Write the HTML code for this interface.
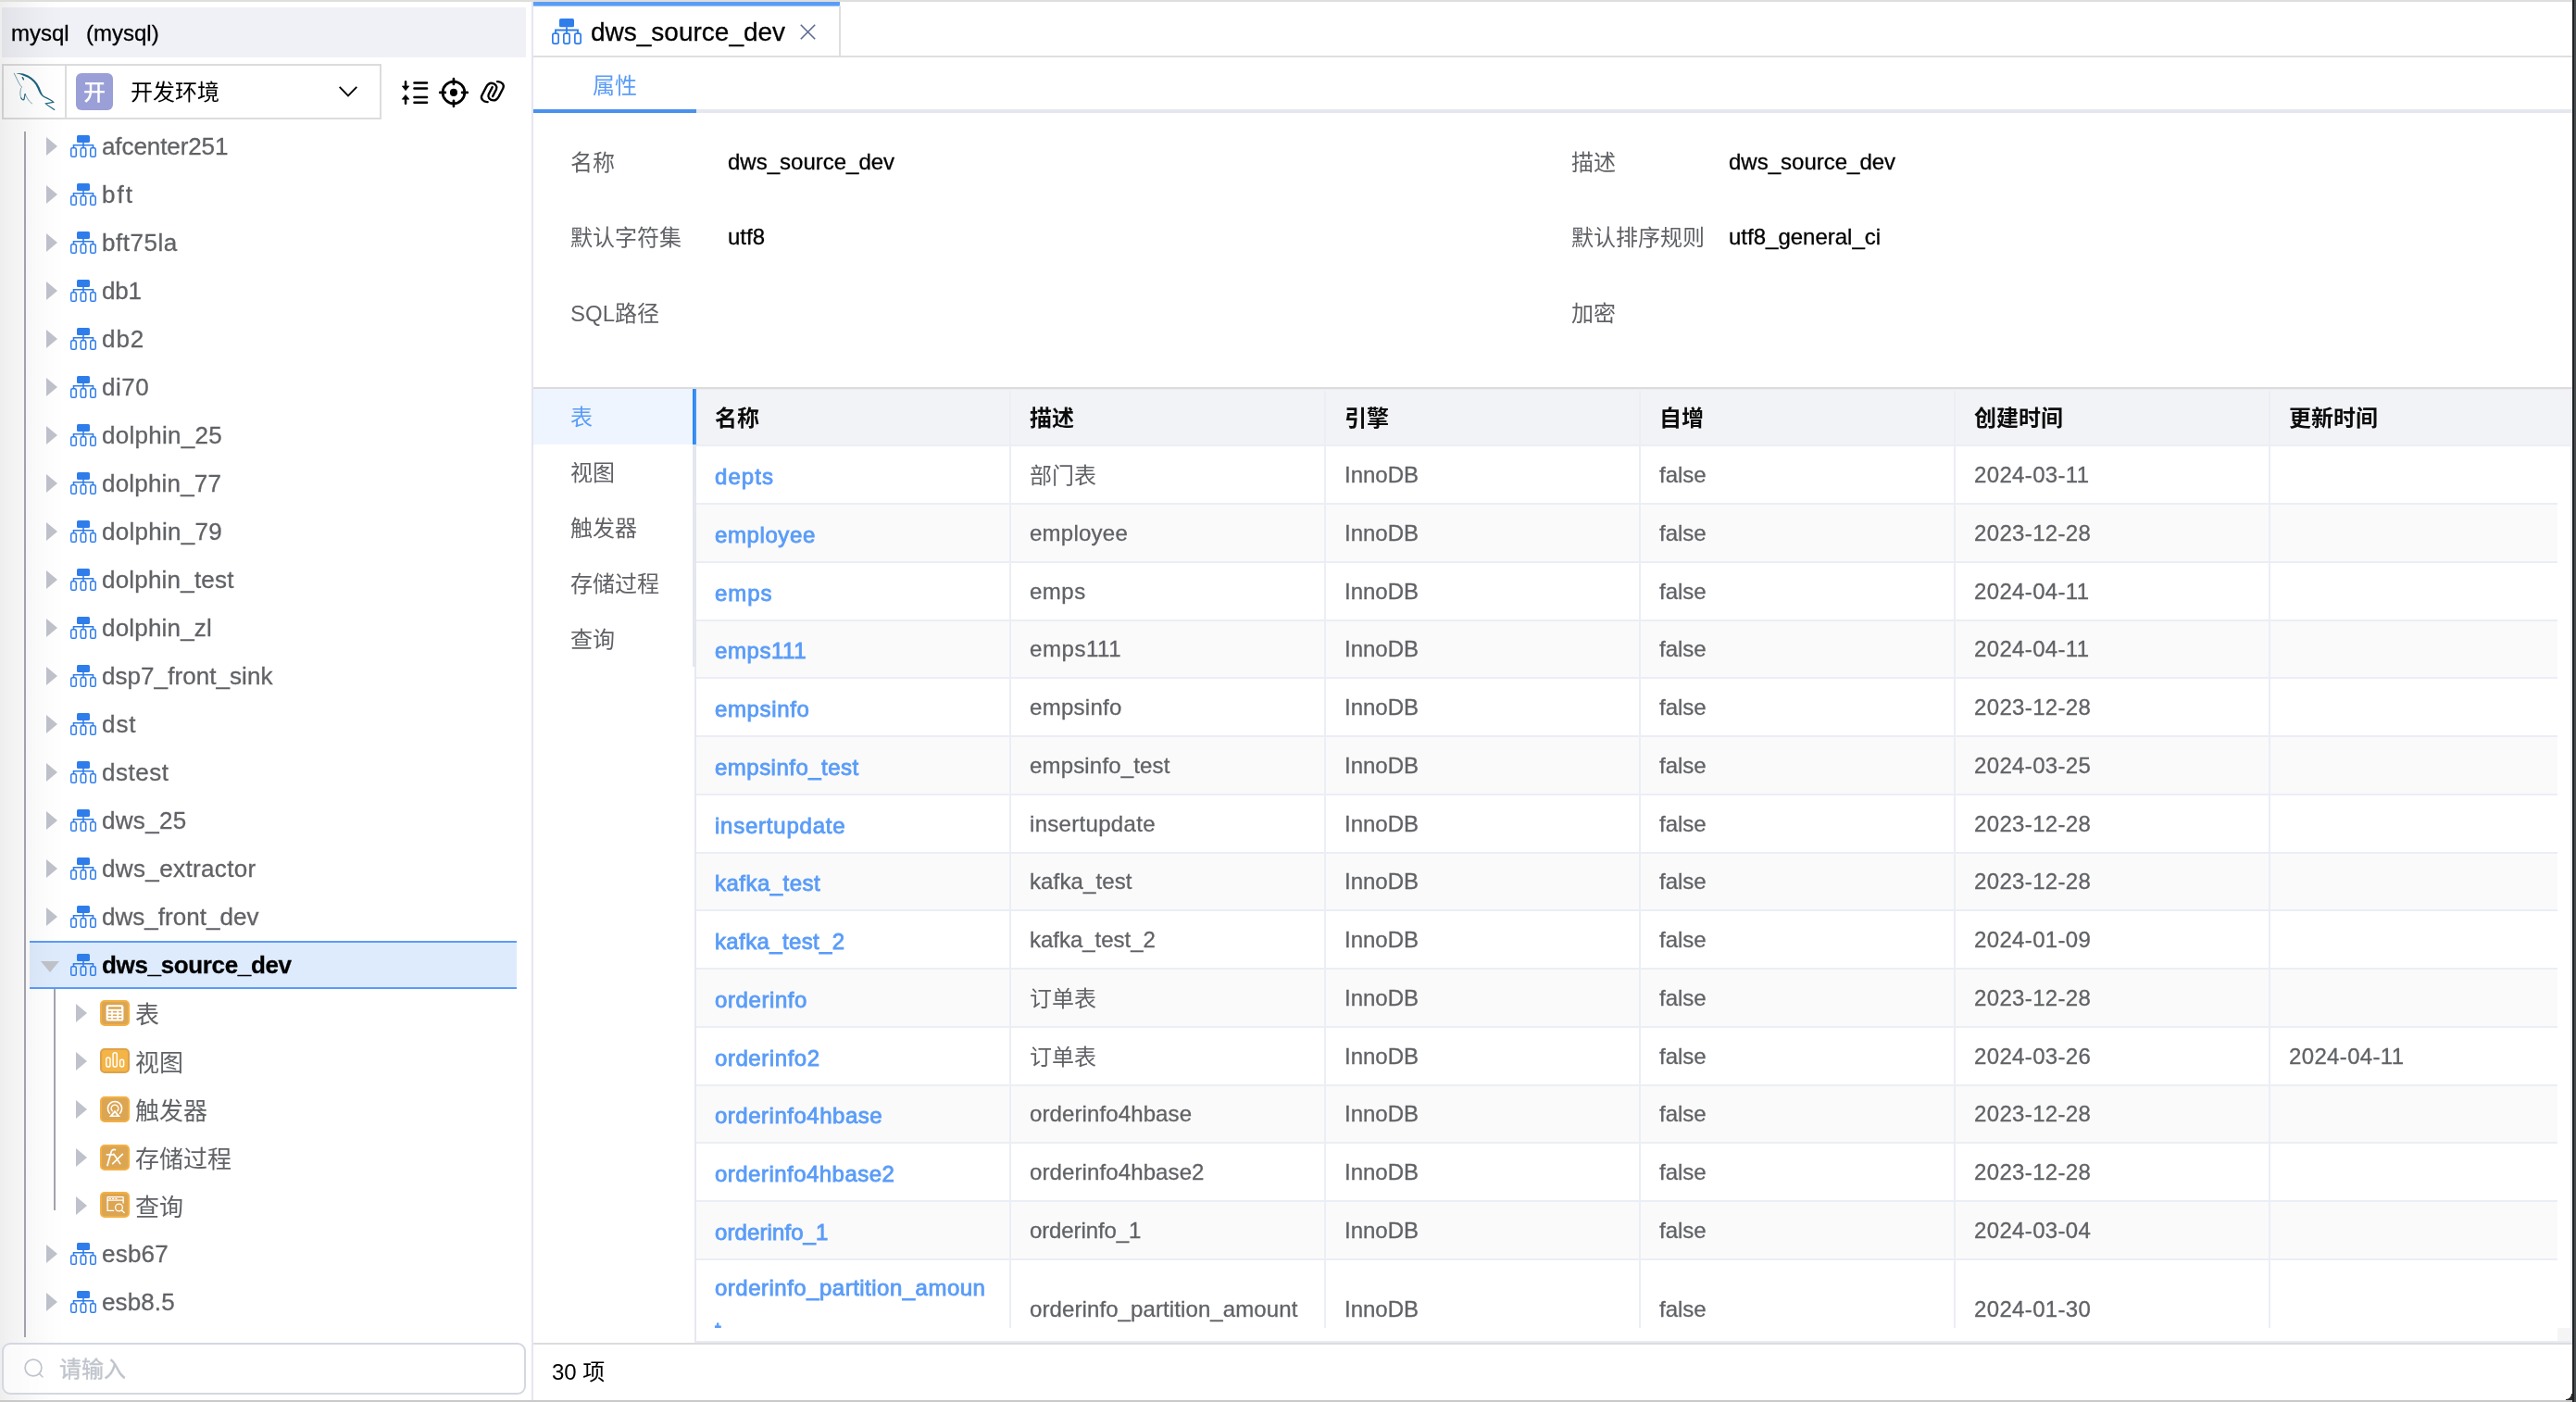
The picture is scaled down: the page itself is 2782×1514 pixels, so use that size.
<!DOCTYPE html>
<html lang="zh-CN"><head><meta charset="utf-8"><title>dws_source_dev</title>
<style>
html,body{margin:0;padding:0;}
body{will-change:transform;-webkit-text-stroke:0.3px;width:2782px;height:1514px;position:relative;overflow:hidden;background:#fff;font-family:"Liberation Sans","Noto Sans CJK SC",sans-serif;}
body div{position:absolute;white-space:nowrap;box-sizing:border-box;}
svg{position:absolute;overflow:visible;}
.ic{fill:none;stroke:#2f7deb;stroke-width:1.5;}
</style></head><body>
<svg width="0" height="0" style="left:0;top:0"><defs>
<symbol id="db" viewBox="0 0 28 24" overflow="visible">
<rect x="7" y="0" width="14" height="8" rx="1.6" fill="#2f7deb"/>
<path d="M14 8V13.5M3.5 13.5V10.75H24.5V13.5" fill="none" stroke="#2f7deb" stroke-width="1.6"/>
<rect x="0.75" y="13.75" width="5.5" height="9.5" rx="1.6" fill="none" stroke="#2f7deb" stroke-width="1.5"/>
<rect x="11.25" y="13.75" width="5.5" height="9.5" rx="1.6" fill="none" stroke="#2f7deb" stroke-width="1.5"/>
<rect x="21.75" y="13.75" width="5.5" height="9.5" rx="1.6" fill="none" stroke="#2f7deb" stroke-width="1.5"/>
</symbol>
</defs></svg>

<div style="left:0px;top:0px;width:2782px;height:2px;background:#dededc;"></div>
<div style="left:2px;top:8px;width:566px;height:54px;background:#f0f1f7;"></div>
<div style="left:12px;top:18px;height:36px;line-height:36px;font-size:24px;color:#000;">mysql</div>
<div style="left:93px;top:18px;height:36px;line-height:36px;font-size:24px;color:#000;">(mysql)</div>
<div style="left:2px;top:69px;width:410px;height:60px;border:2px solid #dcdcdc;background:#fff;"></div>
<div style="left:70px;top:71px;width:2px;height:56px;background:#dcdcdc;"></div>
<svg style="left:0;top:64px" width="140" height="70" viewBox="0 0 2576 1288">
<path d="M322 280 C400 270 480 285 560 322 C660 375 740 460 785 560 C815 640 835 700 880 738 L862 752 C800 715 775 650 742 570 C705 485 640 415 555 365 C485 325 410 300 322 280Z" fill="#1d6480"/>
<path d="M862 740 C930 770 1010 800 1062 852 L908 880 C960 930 1030 965 1088 1008" fill="none" stroke="#1d6480" stroke-width="21" stroke-linejoin="miter" stroke-miterlimit="6"/>
<path d="M280 280 C300 330 330 370 350 420 C370 470 395 510 435 555 C415 570 410 585 412 600 C398 650 398 720 420 770 C440 810 470 815 480 790 C488 750 492 715 500 690 C520 730 540 780 580 830 C600 850 620 870 635 880" fill="none" stroke="#3b7a92" stroke-width="13" stroke-linejoin="round" stroke-linecap="round"/>
<path d="M420 770 C440 810 470 815 480 790 C488 750 492 715 500 690" fill="none" stroke="#2a6f88" stroke-width="22" stroke-linejoin="round" stroke-linecap="round"/>
<path d="M447 362 C457 377 465 390 468 402" fill="none" stroke="#1d6480" stroke-width="26" stroke-linecap="round"/>
</svg>
<div style="left:82px;top:79px;width:40px;height:40px;background:#9b9fd7;border-radius:6px;"></div>
<div style="left:82px;top:81.5px;height:36px;line-height:36px;font-size:24px;color:#fff;font-weight:500;width:40px;text-align:center;-webkit-text-stroke:0;">开</div>
<div style="left:141px;top:81.5px;height:36px;line-height:36px;font-size:24px;color:#000;-webkit-text-stroke:0;">开发环境</div>
<svg style="left:366px;top:93px" width="20" height="12" viewBox="0 0 20 12"><path d="M0.7 0.8L10 10.3L19.3 0.8" fill="none" stroke="#000" stroke-width="1.9"/></svg>
<svg style="left:420px;top:70px" width="140" height="60" viewBox="0 0 2576 1104">
<g fill="none" stroke="#000" stroke-width="46" stroke-linecap="round">
<path d="M505 360H755M505 468H755M505 645H755M505 752H755"/>
<path d="M332 335V440M332 770V670"/>
</g>
<path d="M262 422H402L332 510Z M262 684H402L332 596Z" fill="#000" stroke="#000" stroke-width="12" stroke-linejoin="round"/>
<g fill="none" stroke="#000" stroke-width="50">
<circle cx="1287" cy="550" r="218"/>
<path d="M1287 280V385M1287 715V825M1015 550H1120M1455 550H1560" stroke-linecap="round"/>
</g>
<circle cx="1287" cy="550" r="74" fill="#000"/>
</svg>
<svg style="left:510px;top:80px" width="45" height="38" viewBox="0 0 1660.5 1402.2">
<g fill="none" stroke="#000" stroke-width="86" stroke-linecap="round" stroke-linejoin="round">
<path d="M800 520L655 800C600 920 700 1050 850 1050C960 1050 1010 980 1060 890L1230 560C1290 440 1180 290 1000 300"/>
<path d="M814 890L959 610C1014 490 914 360 764 360C654 360 604 430 554 520L384 850C324 970 434 1120 614 1110"/>
</g></svg>
<div style="left:26px;top:142px;width:2px;height:1302px;background:#a8a8b3;"></div>
<div style="left:58px;top:1068px;width:2px;height:239px;background:#a3a3af;"></div>
<svg style="left:50px;top:148px" width="12" height="20" viewBox="0 0 12 20"><path d="M0 0L12 10L0 20Z" fill="#bfc2cb"/></svg>
<svg style="left:76px;top:146px" width="28" height="24"><use href="#db"/></svg>
<div style="left:110px;top:138px;height:40px;line-height:40px;font-size:26px;color:#606266;letter-spacing:-0.09px;">afcenter251</div>
<svg style="left:50px;top:200px" width="12" height="20" viewBox="0 0 12 20"><path d="M0 0L12 10L0 20Z" fill="#bfc2cb"/></svg>
<svg style="left:76px;top:198px" width="28" height="24"><use href="#db"/></svg>
<div style="left:110px;top:190px;height:40px;line-height:40px;font-size:26px;color:#606266;letter-spacing:2.00px;">bft</div>
<svg style="left:50px;top:252px" width="12" height="20" viewBox="0 0 12 20"><path d="M0 0L12 10L0 20Z" fill="#bfc2cb"/></svg>
<svg style="left:76px;top:250px" width="28" height="24"><use href="#db"/></svg>
<div style="left:110px;top:242px;height:40px;line-height:40px;font-size:26px;color:#606266;letter-spacing:0.52px;">bft75la</div>
<svg style="left:50px;top:304px" width="12" height="20" viewBox="0 0 12 20"><path d="M0 0L12 10L0 20Z" fill="#bfc2cb"/></svg>
<svg style="left:76px;top:302px" width="28" height="24"><use href="#db"/></svg>
<div style="left:110px;top:294px;height:40px;line-height:40px;font-size:26px;color:#606266;letter-spacing:-0.15px;">db1</div>
<svg style="left:50px;top:356px" width="12" height="20" viewBox="0 0 12 20"><path d="M0 0L12 10L0 20Z" fill="#bfc2cb"/></svg>
<svg style="left:76px;top:354px" width="28" height="24"><use href="#db"/></svg>
<div style="left:110px;top:346px;height:40px;line-height:40px;font-size:26px;color:#606266;letter-spacing:0.95px;">db2</div>
<svg style="left:50px;top:408px" width="12" height="20" viewBox="0 0 12 20"><path d="M0 0L12 10L0 20Z" fill="#bfc2cb"/></svg>
<svg style="left:76px;top:406px" width="28" height="24"><use href="#db"/></svg>
<div style="left:110px;top:398px;height:40px;line-height:40px;font-size:26px;color:#606266;letter-spacing:0.55px;">di70</div>
<svg style="left:50px;top:460px" width="12" height="20" viewBox="0 0 12 20"><path d="M0 0L12 10L0 20Z" fill="#bfc2cb"/></svg>
<svg style="left:76px;top:458px" width="28" height="24"><use href="#db"/></svg>
<div style="left:110px;top:450px;height:40px;line-height:40px;font-size:26px;color:#606266;letter-spacing:0.27px;">dolphin_25</div>
<svg style="left:50px;top:512px" width="12" height="20" viewBox="0 0 12 20"><path d="M0 0L12 10L0 20Z" fill="#bfc2cb"/></svg>
<svg style="left:76px;top:510px" width="28" height="24"><use href="#db"/></svg>
<div style="left:110px;top:502px;height:40px;line-height:40px;font-size:26px;color:#606266;letter-spacing:0.19px;">dolphin_77</div>
<svg style="left:50px;top:564px" width="12" height="20" viewBox="0 0 12 20"><path d="M0 0L12 10L0 20Z" fill="#bfc2cb"/></svg>
<svg style="left:76px;top:562px" width="28" height="24"><use href="#db"/></svg>
<div style="left:110px;top:554px;height:40px;line-height:40px;font-size:26px;color:#606266;letter-spacing:0.27px;">dolphin_79</div>
<svg style="left:50px;top:616px" width="12" height="20" viewBox="0 0 12 20"><path d="M0 0L12 10L0 20Z" fill="#bfc2cb"/></svg>
<svg style="left:76px;top:614px" width="28" height="24"><use href="#db"/></svg>
<div style="left:110px;top:606px;height:40px;line-height:40px;font-size:26px;color:#606266;letter-spacing:0.20px;">dolphin_test</div>
<svg style="left:50px;top:668px" width="12" height="20" viewBox="0 0 12 20"><path d="M0 0L12 10L0 20Z" fill="#bfc2cb"/></svg>
<svg style="left:76px;top:666px" width="28" height="24"><use href="#db"/></svg>
<div style="left:110px;top:658px;height:40px;line-height:40px;font-size:26px;color:#606266;letter-spacing:0.19px;">dolphin_zl</div>
<svg style="left:50px;top:720px" width="12" height="20" viewBox="0 0 12 20"><path d="M0 0L12 10L0 20Z" fill="#bfc2cb"/></svg>
<svg style="left:76px;top:718px" width="28" height="24"><use href="#db"/></svg>
<div style="left:110px;top:710px;height:40px;line-height:40px;font-size:26px;color:#606266;letter-spacing:0.06px;">dsp7_front_sink</div>
<svg style="left:50px;top:772px" width="12" height="20" viewBox="0 0 12 20"><path d="M0 0L12 10L0 20Z" fill="#bfc2cb"/></svg>
<svg style="left:76px;top:770px" width="28" height="24"><use href="#db"/></svg>
<div style="left:110px;top:762px;height:40px;line-height:40px;font-size:26px;color:#606266;letter-spacing:0.95px;">dst</div>
<svg style="left:50px;top:824px" width="12" height="20" viewBox="0 0 12 20"><path d="M0 0L12 10L0 20Z" fill="#bfc2cb"/></svg>
<svg style="left:76px;top:822px" width="28" height="24"><use href="#db"/></svg>
<div style="left:110px;top:814px;height:40px;line-height:40px;font-size:26px;color:#606266;letter-spacing:0.51px;">dstest</div>
<svg style="left:50px;top:876px" width="12" height="20" viewBox="0 0 12 20"><path d="M0 0L12 10L0 20Z" fill="#bfc2cb"/></svg>
<svg style="left:76px;top:874px" width="28" height="24"><use href="#db"/></svg>
<div style="left:110px;top:866px;height:40px;line-height:40px;font-size:26px;color:#606266;letter-spacing:0.31px;">dws_25</div>
<svg style="left:50px;top:928px" width="12" height="20" viewBox="0 0 12 20"><path d="M0 0L12 10L0 20Z" fill="#bfc2cb"/></svg>
<svg style="left:76px;top:926px" width="28" height="24"><use href="#db"/></svg>
<div style="left:110px;top:918px;height:40px;line-height:40px;font-size:26px;color:#606266;letter-spacing:0.37px;">dws_extractor</div>
<svg style="left:50px;top:980px" width="12" height="20" viewBox="0 0 12 20"><path d="M0 0L12 10L0 20Z" fill="#bfc2cb"/></svg>
<svg style="left:76px;top:978px" width="28" height="24"><use href="#db"/></svg>
<div style="left:110px;top:970px;height:40px;line-height:40px;font-size:26px;color:#606266;letter-spacing:0.04px;">dws_front_dev</div>
<div style="left:32px;top:1016px;width:526px;height:52px;background:#ddebfd;border-top:2px solid #5a9cf8;border-bottom:2px solid #5a9cf8;"></div>
<svg style="left:44px;top:1038px" width="20" height="12" viewBox="0 0 20 12"><path d="M0 0H20L10 12Z" fill="#c0c2c8"/></svg>
<svg style="left:76px;top:1030px" width="28" height="24"><use href="#db"/></svg>
<div style="left:110px;top:1022px;height:40px;line-height:40px;font-size:26px;color:#000;font-weight:700;letter-spacing:-0.35px;">dws_source_dev</div>
<svg style="left:82px;top:1084px" width="12" height="20" viewBox="0 0 12 20"><path d="M0 0L12 10L0 20Z" fill="#bfc2cb"/></svg>
<svg style="left:108px;top:1080px" width="32" height="28" viewBox="0 0 32 28">
<rect x="1" y="1" width="30" height="26" rx="4" fill="#dca552" stroke="#f3b044" stroke-width="2"/>
<rect x="6.6" y="5.2" width="18.8" height="17.4" rx="2.2" fill="#fff"/>
<rect x="9" y="7.2" width="14" height="2.6" rx="0.5" fill="#dca552"/>
<path d="M9.3 12.8H11.6M14.4 12.8H17.8M20.6 12.8H22.8" stroke="#dca552" stroke-width="1.4" stroke-linecap="round"/>
<path d="M9.3 16.25H11.6M14.4 16.25H17.8M20.6 16.25H22.8" stroke="#dca552" stroke-width="1.4" stroke-linecap="round"/>
<path d="M9.3 19.700000000000003H11.6M14.4 19.700000000000003H17.8M20.6 19.700000000000003H22.8" stroke="#dca552" stroke-width="1.4" stroke-linecap="round"/>
</svg>
<div style="left:146px;top:1076px;height:40px;line-height:40px;font-size:26px;color:#606266;-webkit-text-stroke:0;">表</div>
<svg style="left:82px;top:1136px" width="12" height="20" viewBox="0 0 12 20"><path d="M0 0L12 10L0 20Z" fill="#bfc2cb"/></svg>
<svg style="left:108px;top:1132px" width="32" height="28" viewBox="0 0 32 28">
<rect x="1" y="1" width="30" height="25" rx="4" fill="#f4b446" stroke="#dda24c" stroke-width="2"/>
<g fill="none" stroke="#fff" stroke-width="1.5">
<rect x="6.8" y="9.9" width="4.2" height="10.2" rx="2.1"/>
<rect x="14.1" y="4.8" width="4.2" height="15.3" rx="2.1"/>
<rect x="21.6" y="12.3" width="4.0" height="7.8" rx="2"/>
</g>
</svg>
<div style="left:146px;top:1128px;height:40px;line-height:40px;font-size:26px;color:#606266;-webkit-text-stroke:0;">视图</div>
<svg style="left:82px;top:1188px" width="12" height="20" viewBox="0 0 12 20"><path d="M0 0L12 10L0 20Z" fill="#bfc2cb"/></svg>
<svg style="left:108px;top:1184px" width="32" height="28" viewBox="0 0 32 28">
<rect x="1" y="1" width="30" height="26" rx="4" fill="#dca552" stroke="#f3b044" stroke-width="2"/>
<g fill="none" stroke="#fff" stroke-width="1.5" stroke-linecap="round">
<path d="M10.4 18.2A7.6 7.6 0 1 1 21.6 18.2"/>
<path d="M13.2 15.6A3.8 3.8 0 1 1 18.8 15.6"/>
</g>
<path d="M16 14.8L22.2 22H9.8Z" fill="#fff"/><path d="M16 17.6L18.2 20.4H13.8Z" fill="#dca552"/>
</svg>
<div style="left:146px;top:1180px;height:40px;line-height:40px;font-size:26px;color:#606266;-webkit-text-stroke:0;">触发器</div>
<svg style="left:82px;top:1240px" width="12" height="20" viewBox="0 0 12 20"><path d="M0 0L12 10L0 20Z" fill="#bfc2cb"/></svg>
<svg style="left:108px;top:1236px" width="32" height="28" viewBox="0 0 32 28">
<rect x="1" y="1" width="30" height="26" rx="4" fill="#dca552" stroke="#f3b044" stroke-width="2"/>
<g fill="none" stroke="#fff" stroke-width="1.7" stroke-linecap="round">
<path d="M16.4 5.6C13.6 4.9 12.2 6.6 11.7 9.3L8 22.6"/>
<path d="M7.4 10.8H14.6"/>
<path d="M14.9 10.3L21.7 20.6M24.4 10.3L13.7 20.6"/>
</g>
</svg>
<div style="left:146px;top:1232px;height:40px;line-height:40px;font-size:26px;color:#606266;-webkit-text-stroke:0;">存储过程</div>
<svg style="left:82px;top:1292px" width="12" height="20" viewBox="0 0 12 20"><path d="M0 0L12 10L0 20Z" fill="#bfc2cb"/></svg>
<svg style="left:108px;top:1287px" width="32" height="28" viewBox="0 0 32 28">
<rect x="1" y="1" width="30" height="26" rx="4" fill="#dca552" stroke="#f3b044" stroke-width="2"/>
<g fill="none" stroke="#fff" stroke-width="1.3" stroke-linecap="round" stroke-linejoin="round">
<path d="M25.1 12V5.6H8.1V20.4H14.6"/>
<path d="M8.1 9.2H25.1"/>
<circle cx="20.5" cy="17" r="3.9"/>
<path d="M23.4 20L26.2 22.6"/>
</g>
<path d="M10.3 7.4H11.4M13.6 7.4H14.7M16.9 7.4H18" stroke="#fff" stroke-width="1.2" stroke-linecap="round"/>
</svg>
<div style="left:146px;top:1284px;height:40px;line-height:40px;font-size:26px;color:#606266;-webkit-text-stroke:0;">查询</div>
<svg style="left:50px;top:1344px" width="12" height="20" viewBox="0 0 12 20"><path d="M0 0L12 10L0 20Z" fill="#bfc2cb"/></svg>
<svg style="left:76px;top:1342px" width="28" height="24"><use href="#db"/></svg>
<div style="left:110px;top:1334px;height:40px;line-height:40px;font-size:26px;color:#606266;letter-spacing:0.22px;">esb67</div>
<svg style="left:50px;top:1396px" width="12" height="20" viewBox="0 0 12 20"><path d="M0 0L12 10L0 20Z" fill="#bfc2cb"/></svg>
<svg style="left:76px;top:1394px" width="28" height="24"><use href="#db"/></svg>
<div style="left:110px;top:1386px;height:40px;line-height:40px;font-size:26px;color:#606266;letter-spacing:0.11px;">esb8.5</div>
<div style="left:0px;top:2px;width:70px;height:1510px;background:linear-gradient(to right,rgba(0,0,0,0.067) 0,rgba(0,0,0,0.047) 18.5%,rgba(0,0,0,0.035) 37%,rgba(0,0,0,0.02) 57%,rgba(0,0,0,0.008) 78%,rgba(0,0,0,0) 100%);"></div>
<div style="left:2px;top:1450px;width:566px;height:56px;border:2px solid #d4d7e1;border-radius:9px;background:rgba(255,255,255,0.6);"></div>
<svg style="left:25px;top:1466px" width="24" height="24" viewBox="0 0 24 24"><circle cx="11" cy="11" r="8.9" fill="none" stroke="#c0c4cc" stroke-width="1.7"/><path d="M17.4 17.4L21 21" stroke="#c0c4cc" stroke-width="1.5" stroke-linecap="round"/></svg>
<div style="left:64px;top:1460.5px;height:36px;line-height:36px;font-size:24px;color:#c0c4cc;-webkit-text-stroke:0.4px #c0c4cc;">请输入</div>
<div style="left:574px;top:2px;width:2px;height:1510px;background:#e4e6ef;"></div>
<div style="left:576px;top:60px;width:2202px;height:2px;background:#dfdfdf;"></div>
<div style="left:576px;top:2px;width:331px;height:5px;background:linear-gradient(#5a9df7 0,#5a9df7 80%,#9cc4fa 80%,#9cc4fa 100%);"></div>
<div style="left:906px;top:6px;width:2px;height:54px;background:#dfdfdf;"></div>
<svg style="left:596px;top:20px" width="32" height="28" viewBox="0 0 28 24" preserveAspectRatio="none"><use href="#db"/></svg>
<div style="left:638px;top:13.7px;height:42px;line-height:42px;font-size:28px;color:#000;">dws_source_dev</div>
<svg style="left:864px;top:26px" width="17" height="17" viewBox="0 0 17 17"><path d="M0.8 0.8L16.2 16.2M16.2 0.8L0.8 16.2" stroke="#5a6b8c" stroke-width="1.6" fill="none"/></svg>
<div style="left:576px;top:118px;width:2202px;height:4px;background:#e4e7ed;"></div>
<div style="left:576px;top:118px;width:176px;height:4px;background:#4a90ef;"></div>
<div style="left:640px;top:74.5px;height:36px;line-height:36px;font-size:24px;color:#5a9cf8;-webkit-text-stroke:0;">属性</div>
<div style="left:616px;top:158.3px;height:36px;line-height:36px;font-size:24px;color:#606266;-webkit-text-stroke:0;">名称</div>
<div style="left:786px;top:157px;height:36px;line-height:36px;font-size:24px;color:#000;">dws_source_dev</div>
<div style="left:616px;top:239.3px;height:36px;line-height:36px;font-size:24px;color:#606266;-webkit-text-stroke:0;">默认字符集</div>
<div style="left:786px;top:238px;height:36px;line-height:36px;font-size:24px;color:#000;">utf8</div>
<div style="left:616px;top:320.6px;height:36px;line-height:36px;font-size:24px;color:#606266;-webkit-text-stroke:0;">SQL路径</div>
<div style="left:1697px;top:158.3px;height:36px;line-height:36px;font-size:24px;color:#606266;-webkit-text-stroke:0;">描述</div>
<div style="left:1867px;top:157px;height:36px;line-height:36px;font-size:24px;color:#000;">dws_source_dev</div>
<div style="left:1697px;top:239.3px;height:36px;line-height:36px;font-size:24px;color:#606266;-webkit-text-stroke:0;">默认排序规则</div>
<div style="left:1867px;top:238px;height:36px;line-height:36px;font-size:24px;color:#000;">utf8_general_ci</div>
<div style="left:1697px;top:320.6px;height:36px;line-height:36px;font-size:24px;color:#606266;-webkit-text-stroke:0;">加密</div>
<div style="left:576px;top:418px;width:2202px;height:2px;background:#dcdcdb;"></div>
<div style="left:576px;top:420px;width:172px;height:60px;background:#eef5fe;"></div>
<div style="left:748px;top:420px;width:4px;height:300px;background:#e4e7ed;"></div>
<div style="left:748px;top:420px;width:4px;height:60px;background:linear-gradient(to right,#2d86f6 50%,#4395f6 50%);"></div>
<div style="left:616px;top:433px;height:36px;line-height:36px;font-size:24px;color:#5a9cf8;-webkit-text-stroke:0;">表</div>
<div style="left:616px;top:493px;height:36px;line-height:36px;font-size:24px;color:#606266;-webkit-text-stroke:0;">视图</div>
<div style="left:616px;top:553px;height:36px;line-height:36px;font-size:24px;color:#606266;-webkit-text-stroke:0;">触发器</div>
<div style="left:616px;top:613px;height:36px;line-height:36px;font-size:24px;color:#606266;-webkit-text-stroke:0;">存储过程</div>
<div style="left:616px;top:673px;height:36px;line-height:36px;font-size:24px;color:#606266;-webkit-text-stroke:0;">查询</div>
<div style="left:750px;top:720px;width:2px;height:728px;background:#e6e9f2;"></div>
<div style="left:752px;top:420px;width:2025px;height:60px;background:#f2f3f6;"></div>
<div style="left:752px;top:480px;width:2025px;height:2px;background:#ebeef5;"></div>
<div style="left:752px;top:420px;width:2025px;height:1px;background:#eaedf5;"></div>
<div style="left:772px;top:433.8px;height:36px;line-height:36px;font-size:24px;color:#0b0b0b;font-weight:700;-webkit-text-stroke:0;">名称</div>
<div style="left:1112px;top:433.8px;height:36px;line-height:36px;font-size:24px;color:#0b0b0b;font-weight:700;-webkit-text-stroke:0;">描述</div>
<div style="left:1452px;top:433.8px;height:36px;line-height:36px;font-size:24px;color:#0b0b0b;font-weight:700;-webkit-text-stroke:0;">引擎</div>
<div style="left:1792px;top:433.8px;height:36px;line-height:36px;font-size:24px;color:#0b0b0b;font-weight:700;-webkit-text-stroke:0;">自增</div>
<div style="left:2132px;top:433.8px;height:36px;line-height:36px;font-size:24px;color:#0b0b0b;font-weight:700;-webkit-text-stroke:0;">创建时间</div>
<div style="left:2472px;top:433.8px;height:36px;line-height:36px;font-size:24px;color:#0b0b0b;font-weight:700;-webkit-text-stroke:0;">更新时间</div>
<div style="left:752px;top:482px;width:2010px;height:952px;overflow:hidden;">
<div style="left:0;top:0px;width:2010px;height:63px;background:#fff;border-bottom:2px solid #ebeef5;"></div>
<div style="left:20px;top:9.5px;height:46px;line-height:46px;font-size:24px;color:#5a9cf8;letter-spacing:1.05px;-webkit-text-stroke:0.85px #5a9cf8;">depts</div>
<div style="left:360px;top:8.5px;height:46px;line-height:46px;font-size:24px;color:#606266;-webkit-text-stroke:0;">部门表</div>
<div style="left:700px;top:7.5px;height:46px;line-height:46px;font-size:24px;color:#606266;">InnoDB</div>
<div style="left:1040px;top:7.5px;height:46px;line-height:46px;font-size:24px;color:#606266;">false</div>
<div style="left:1380px;top:7.5px;height:46px;line-height:46px;font-size:24px;color:#606266;letter-spacing:0.35px;">2024-03-11</div>
<div style="left:0;top:63px;width:2010px;height:63px;background:#fafafa;border-bottom:2px solid #ebeef5;"></div>
<div style="left:20px;top:72.5px;height:46px;line-height:46px;font-size:24px;color:#5a9cf8;letter-spacing:0.60px;-webkit-text-stroke:0.85px #5a9cf8;">employee</div>
<div style="left:360px;top:70.5px;height:46px;line-height:46px;font-size:24px;color:#606266;letter-spacing:0.24px;">employee</div>
<div style="left:700px;top:70.5px;height:46px;line-height:46px;font-size:24px;color:#606266;">InnoDB</div>
<div style="left:1040px;top:70.5px;height:46px;line-height:46px;font-size:24px;color:#606266;">false</div>
<div style="left:1380px;top:70.5px;height:46px;line-height:46px;font-size:24px;color:#606266;letter-spacing:0.35px;">2023-12-28</div>
<div style="left:0;top:126px;width:2010px;height:63px;background:#fff;border-bottom:2px solid #ebeef5;"></div>
<div style="left:20px;top:135.5px;height:46px;line-height:46px;font-size:24px;color:#5a9cf8;letter-spacing:0.97px;-webkit-text-stroke:0.85px #5a9cf8;">emps</div>
<div style="left:360px;top:133.5px;height:46px;line-height:46px;font-size:24px;color:#606266;letter-spacing:0.5px;">emps</div>
<div style="left:700px;top:133.5px;height:46px;line-height:46px;font-size:24px;color:#606266;">InnoDB</div>
<div style="left:1040px;top:133.5px;height:46px;line-height:46px;font-size:24px;color:#606266;">false</div>
<div style="left:1380px;top:133.5px;height:46px;line-height:46px;font-size:24px;color:#606266;letter-spacing:0.35px;">2024-04-11</div>
<div style="left:0;top:189px;width:2010px;height:62px;background:#fafafa;border-bottom:2px solid #ebeef5;"></div>
<div style="left:20px;top:198px;height:46px;line-height:46px;font-size:24px;color:#5a9cf8;letter-spacing:0.57px;-webkit-text-stroke:0.85px #5a9cf8;">emps111</div>
<div style="left:360px;top:196px;height:46px;line-height:46px;font-size:24px;color:#606266;letter-spacing:0.57px;">emps111</div>
<div style="left:700px;top:196px;height:46px;line-height:46px;font-size:24px;color:#606266;">InnoDB</div>
<div style="left:1040px;top:196px;height:46px;line-height:46px;font-size:24px;color:#606266;">false</div>
<div style="left:1380px;top:196px;height:46px;line-height:46px;font-size:24px;color:#606266;letter-spacing:0.35px;">2024-04-11</div>
<div style="left:0;top:251px;width:2010px;height:63px;background:#fff;border-bottom:2px solid #ebeef5;"></div>
<div style="left:20px;top:260.5px;height:46px;line-height:46px;font-size:24px;color:#5a9cf8;letter-spacing:0.64px;-webkit-text-stroke:0.85px #5a9cf8;">empsinfo</div>
<div style="left:360px;top:258.5px;height:46px;line-height:46px;font-size:24px;color:#606266;letter-spacing:0.29px;">empsinfo</div>
<div style="left:700px;top:258.5px;height:46px;line-height:46px;font-size:24px;color:#606266;">InnoDB</div>
<div style="left:1040px;top:258.5px;height:46px;line-height:46px;font-size:24px;color:#606266;">false</div>
<div style="left:1380px;top:258.5px;height:46px;line-height:46px;font-size:24px;color:#606266;letter-spacing:0.35px;">2023-12-28</div>
<div style="left:0;top:314px;width:2010px;height:63px;background:#fafafa;border-bottom:2px solid #ebeef5;"></div>
<div style="left:20px;top:323.5px;height:46px;line-height:46px;font-size:24px;color:#5a9cf8;letter-spacing:0.48px;-webkit-text-stroke:0.85px #5a9cf8;">empsinfo_test</div>
<div style="left:360px;top:321.5px;height:46px;line-height:46px;font-size:24px;color:#606266;letter-spacing:0.17px;">empsinfo_test</div>
<div style="left:700px;top:321.5px;height:46px;line-height:46px;font-size:24px;color:#606266;">InnoDB</div>
<div style="left:1040px;top:321.5px;height:46px;line-height:46px;font-size:24px;color:#606266;">false</div>
<div style="left:1380px;top:321.5px;height:46px;line-height:46px;font-size:24px;color:#606266;letter-spacing:0.35px;">2024-03-25</div>
<div style="left:0;top:377px;width:2010px;height:63px;background:#fff;border-bottom:2px solid #ebeef5;"></div>
<div style="left:20px;top:386.5px;height:46px;line-height:46px;font-size:24px;color:#5a9cf8;letter-spacing:0.77px;-webkit-text-stroke:0.85px #5a9cf8;">insertupdate</div>
<div style="left:360px;top:384.5px;height:46px;line-height:46px;font-size:24px;color:#606266;letter-spacing:0.31px;">insertupdate</div>
<div style="left:700px;top:384.5px;height:46px;line-height:46px;font-size:24px;color:#606266;">InnoDB</div>
<div style="left:1040px;top:384.5px;height:46px;line-height:46px;font-size:24px;color:#606266;">false</div>
<div style="left:1380px;top:384.5px;height:46px;line-height:46px;font-size:24px;color:#606266;letter-spacing:0.35px;">2023-12-28</div>
<div style="left:0;top:440px;width:2010px;height:62px;background:#fafafa;border-bottom:2px solid #ebeef5;"></div>
<div style="left:20px;top:449px;height:46px;line-height:46px;font-size:24px;color:#5a9cf8;letter-spacing:0.48px;-webkit-text-stroke:0.85px #5a9cf8;">kafka_test</div>
<div style="left:360px;top:447px;height:46px;line-height:46px;font-size:24px;color:#606266;letter-spacing:0.12px;">kafka_test</div>
<div style="left:700px;top:447px;height:46px;line-height:46px;font-size:24px;color:#606266;">InnoDB</div>
<div style="left:1040px;top:447px;height:46px;line-height:46px;font-size:24px;color:#606266;">false</div>
<div style="left:1380px;top:447px;height:46px;line-height:46px;font-size:24px;color:#606266;letter-spacing:0.35px;">2023-12-28</div>
<div style="left:0;top:502px;width:2010px;height:63px;background:#fff;border-bottom:2px solid #ebeef5;"></div>
<div style="left:20px;top:511.5px;height:46px;line-height:46px;font-size:24px;color:#5a9cf8;letter-spacing:0.37px;-webkit-text-stroke:0.85px #5a9cf8;">kafka_test_2</div>
<div style="left:360px;top:509.5px;height:46px;line-height:46px;font-size:24px;color:#606266;letter-spacing:-0.02px;">kafka_test_2</div>
<div style="left:700px;top:509.5px;height:46px;line-height:46px;font-size:24px;color:#606266;">InnoDB</div>
<div style="left:1040px;top:509.5px;height:46px;line-height:46px;font-size:24px;color:#606266;">false</div>
<div style="left:1380px;top:509.5px;height:46px;line-height:46px;font-size:24px;color:#606266;letter-spacing:0.35px;">2024-01-09</div>
<div style="left:0;top:565px;width:2010px;height:63px;background:#fafafa;border-bottom:2px solid #ebeef5;"></div>
<div style="left:20px;top:574.5px;height:46px;line-height:46px;font-size:24px;color:#5a9cf8;letter-spacing:0.59px;-webkit-text-stroke:0.85px #5a9cf8;">orderinfo</div>
<div style="left:360px;top:573.5px;height:46px;line-height:46px;font-size:24px;color:#606266;-webkit-text-stroke:0;">订单表</div>
<div style="left:700px;top:572.5px;height:46px;line-height:46px;font-size:24px;color:#606266;">InnoDB</div>
<div style="left:1040px;top:572.5px;height:46px;line-height:46px;font-size:24px;color:#606266;">false</div>
<div style="left:1380px;top:572.5px;height:46px;line-height:46px;font-size:24px;color:#606266;letter-spacing:0.35px;">2023-12-28</div>
<div style="left:0;top:628px;width:2010px;height:63px;background:#fff;border-bottom:2px solid #ebeef5;"></div>
<div style="left:20px;top:637.5px;height:46px;line-height:46px;font-size:24px;color:#5a9cf8;letter-spacing:0.56px;-webkit-text-stroke:0.85px #5a9cf8;">orderinfo2</div>
<div style="left:360px;top:636.5px;height:46px;line-height:46px;font-size:24px;color:#606266;-webkit-text-stroke:0;">订单表</div>
<div style="left:700px;top:635.5px;height:46px;line-height:46px;font-size:24px;color:#606266;">InnoDB</div>
<div style="left:1040px;top:635.5px;height:46px;line-height:46px;font-size:24px;color:#606266;">false</div>
<div style="left:1380px;top:635.5px;height:46px;line-height:46px;font-size:24px;color:#606266;letter-spacing:0.35px;">2024-03-26</div>
<div style="left:1720px;top:635.5px;height:46px;line-height:46px;font-size:24px;color:#606266;letter-spacing:0.35px;">2024-04-11</div>
<div style="left:0;top:691px;width:2010px;height:62px;background:#fafafa;border-bottom:2px solid #ebeef5;"></div>
<div style="left:20px;top:700px;height:46px;line-height:46px;font-size:24px;color:#5a9cf8;letter-spacing:0.51px;-webkit-text-stroke:0.85px #5a9cf8;">orderinfo4hbase</div>
<div style="left:360px;top:698px;height:46px;line-height:46px;font-size:24px;color:#606266;letter-spacing:0.11px;">orderinfo4hbase</div>
<div style="left:700px;top:698px;height:46px;line-height:46px;font-size:24px;color:#606266;">InnoDB</div>
<div style="left:1040px;top:698px;height:46px;line-height:46px;font-size:24px;color:#606266;">false</div>
<div style="left:1380px;top:698px;height:46px;line-height:46px;font-size:24px;color:#606266;letter-spacing:0.35px;">2023-12-28</div>
<div style="left:0;top:753px;width:2010px;height:63px;background:#fff;border-bottom:2px solid #ebeef5;"></div>
<div style="left:20px;top:762.5px;height:46px;line-height:46px;font-size:24px;color:#5a9cf8;letter-spacing:0.47px;-webkit-text-stroke:0.85px #5a9cf8;">orderinfo4hbase2</div>
<div style="left:360px;top:760.5px;height:46px;line-height:46px;font-size:24px;color:#606266;letter-spacing:0.11px;">orderinfo4hbase2</div>
<div style="left:700px;top:760.5px;height:46px;line-height:46px;font-size:24px;color:#606266;">InnoDB</div>
<div style="left:1040px;top:760.5px;height:46px;line-height:46px;font-size:24px;color:#606266;">false</div>
<div style="left:1380px;top:760.5px;height:46px;line-height:46px;font-size:24px;color:#606266;letter-spacing:0.35px;">2023-12-28</div>
<div style="left:0;top:816px;width:2010px;height:63px;background:#fafafa;border-bottom:2px solid #ebeef5;"></div>
<div style="left:20px;top:825.5px;height:46px;line-height:46px;font-size:24px;color:#5a9cf8;letter-spacing:0.10px;-webkit-text-stroke:0.85px #5a9cf8;">orderinfo_1</div>
<div style="left:360px;top:823.5px;height:46px;line-height:46px;font-size:24px;color:#606266;letter-spacing:-0.11px;">orderinfo_1</div>
<div style="left:700px;top:823.5px;height:46px;line-height:46px;font-size:24px;color:#606266;">InnoDB</div>
<div style="left:1040px;top:823.5px;height:46px;line-height:46px;font-size:24px;color:#606266;">false</div>
<div style="left:1380px;top:823.5px;height:46px;line-height:46px;font-size:24px;color:#606266;letter-spacing:0.35px;">2024-03-04</div>
<div style="left:0;top:879px;width:2010px;height:108px;background:#fff;border-bottom:2px solid #ebeef5;"></div>
<div style="left:20px;top:885.5px;width:296px;line-height:46px;font-size:24px;color:#5a9cf8;white-space:normal;word-break:break-all;letter-spacing:0.49px;-webkit-text-stroke:0.85px #5a9cf8;">orderinfo_partition_amount</div>
<div style="left:360px;top:909px;height:46px;line-height:46px;font-size:24px;color:#606266;letter-spacing:0.1px;">orderinfo_partition_amount</div>
<div style="left:700px;top:909px;height:46px;line-height:46px;font-size:24px;color:#606266;">InnoDB</div>
<div style="left:1040px;top:909px;height:46px;line-height:46px;font-size:24px;color:#606266;">false</div>
<div style="left:1380px;top:909px;height:46px;line-height:46px;font-size:24px;color:#606266;letter-spacing:0.35px;">2024-01-30</div>
<div style="left:338px;top:0;width:2px;height:952px;background:#ebeef5;"></div>
<div style="left:678px;top:0;width:2px;height:952px;background:#ebeef5;"></div>
<div style="left:1018px;top:0;width:2px;height:952px;background:#ebeef5;"></div>
<div style="left:1358px;top:0;width:2px;height:952px;background:#ebeef5;"></div>
<div style="left:1698px;top:0;width:2px;height:952px;background:#ebeef5;"></div>
</div>
<div style="left:1090px;top:422px;width:2px;height:60px;background:#ebeef5;"></div>
<div style="left:1430px;top:422px;width:2px;height:60px;background:#ebeef5;"></div>
<div style="left:1770px;top:422px;width:2px;height:60px;background:#ebeef5;"></div>
<div style="left:2110px;top:422px;width:2px;height:60px;background:#ebeef5;"></div>
<div style="left:2450px;top:422px;width:2px;height:60px;background:#ebeef5;"></div>
<div style="left:2762px;top:1434px;width:15px;height:14px;background:#f5f5f5;"></div>
<div style="left:2776px;top:420px;width:2px;height:1030px;background:#e9ecf4;"></div>
<div style="left:750px;top:1448px;width:2028px;height:2px;background:#e8ebf4;"></div>
<div style="left:576px;top:1450px;width:2202px;height:2px;background:#dcdcdc;"></div>
<div style="left:596px;top:1464px;height:36px;line-height:36px;font-size:24px;color:#000;-webkit-text-stroke:0;">30 项</div>
<div style="left:0px;top:1512px;width:2782px;height:2px;background:#c9c9c9;"></div>
<div style="left:2778px;top:0px;width:4px;height:1514px;background:linear-gradient(to right,#1f2123 0,#1f2123 40%,#4b4e51 60%,#4b4e51 100%);"></div>
<div style="left:2771px;top:1505px;width:7px;height:7px;background:radial-gradient(circle at 0 0,rgba(40,42,44,0) 5.5px,#2a2c2e 6.5px);"></div>
</body></html>
